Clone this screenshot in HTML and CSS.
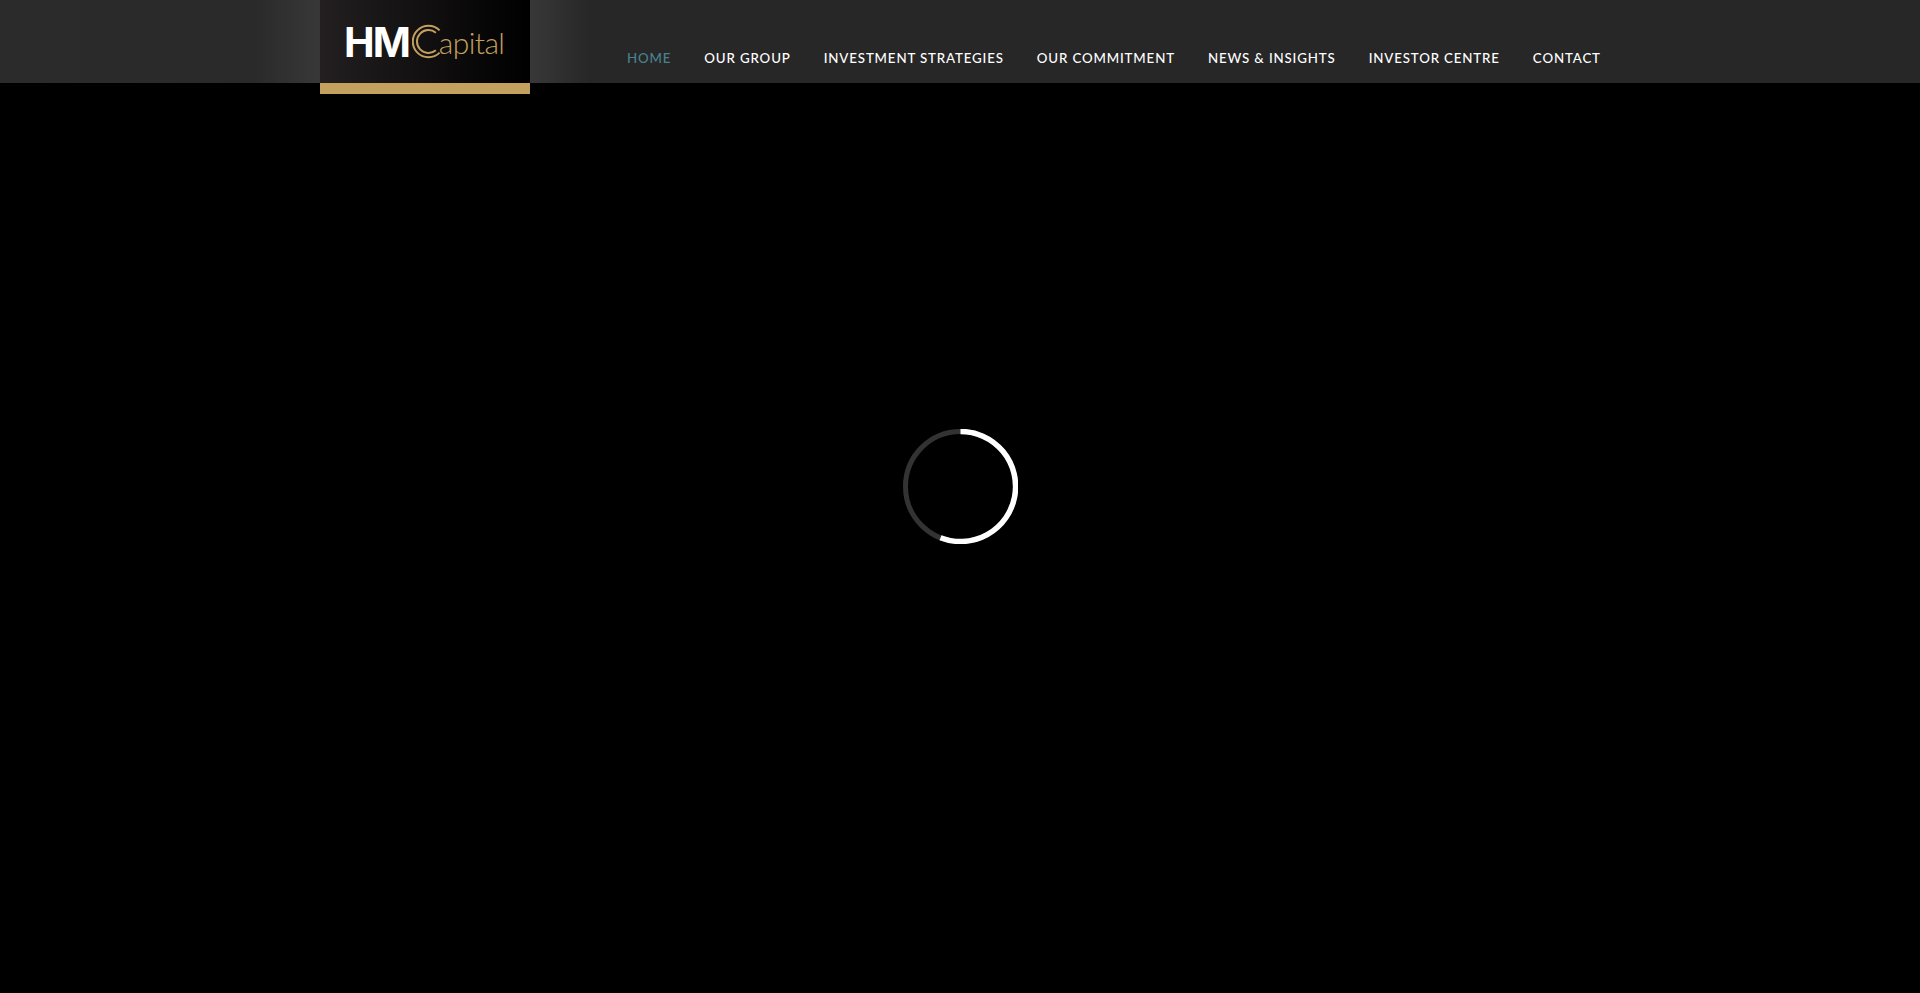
FILE: index.html
```html
<!DOCTYPE html>
<html lang="en">
<head>
  <meta charset="UTF-8" />
  <meta name="viewport" content="width=device-width, initial-scale=1.0"/>
  <title>HMCapital</title>
  <link rel="stylesheet" href="styles.css">
</head>

<body>
  <header class="site-header">
    <div class="header-inner">
      <a href="#" class="logo">
        <span class="logo-hm">HM</span>
        <svg class="logo-mark" viewBox="0 0 30 35" width="30" height="35" aria-hidden="true">
          <path d="M27.6 6.4 A15.7 15.7 0 1 0 27.6 28.6" />
          <path d="M23.9 8.7 A11.5 11.5 0 1 0 23.9 26.3" />
        </svg>
        <span class="logo-capital">apital</span>
      </a>
      <nav class="main-nav">
        <a href="#" class="active">Home</a>
        <a href="#">Our Group</a>
        <a href="#">Investment Strategies</a>
        <a href="#">Our Commitment</a>
        <a href="#">News &amp; Insights</a>
        <a href="#">Investor Centre</a>
        <a href="#">Contact</a>
      </nav>
    </div>
  </header>

  <main class="loader-wrap">
    <svg class="loader" viewBox="0 0 115 115" width="115" height="115" aria-hidden="true">
      <circle class="loader-track" cx="57.5" cy="57.5" r="55" />
      <path class="loader-arc" d="M57.5 2.5 A55 55 0 1 1 37.5 108.7" />
    </svg>
  </main>
</body>
</html>
```

FILE: styles.css
```css
html, body {
  height: 100%;
}

body {
  margin: 0;
  background: #000;
  font-family: "Lato", "Liberation Sans", sans-serif;
  display: flex;
  flex-direction: column;
  overflow: hidden;
}

.site-header {
  height: 83px;
  flex-shrink: 0;
  background: linear-gradient(to right,
    #2b2b2b 0, #2a2a2a 255px, #383838 320px,
    #383838 530px, #272727 590px, #272727 100%);
}

.header-inner {
  display: flex;
  height: 83px;
  margin-left: 320px;
}

.logo {
  width: 186px;
  height: 83px;
  padding-left: 24px;
  border-bottom: 11px solid #c4a05f;
  background: linear-gradient(to right, #231f20, #000);
  display: flex;
  align-items: center;
  text-decoration: none;
  color: #fff;
}

.logo-hm {
  font-family: "Inter", sans-serif;
  font-size: 41px;
  font-weight: 700;
  letter-spacing: -2px;
}

.logo-mark {
  margin-left: 3px;
  flex-shrink: 0;
}

.logo-mark path {
  fill: none;
  stroke: #c4a05f;
  stroke-width: 2;
}

.logo-capital {
  margin-left: -3px;
  color: #c4a05f;
  font-size: 30px;
  font-weight: 300;
  letter-spacing: -0.6px;
}

.main-nav {
  display: flex;
  align-items: flex-end;
  gap: 33px;
  margin-left: 97px;
  padding-bottom: 17px;
}

.main-nav a {
  color: #fff;
  text-decoration: none;
  text-transform: uppercase;
  font-size: 13.3px;
  font-weight: 500;
  letter-spacing: 0.85px;
}

.main-nav a.active {
  color: #4a8290;
}

.loader-wrap {
  flex: 1;
  display: flex;
  align-items: center;
  justify-content: center;
  padding-bottom: 103px;
}

.loader circle,
.loader path {
  fill: none;
  stroke-width: 5;
}

.loader-track {
  stroke: #333;
}

.loader .loader-arc {
  stroke: #fff;
  stroke-width: 5.5;
}
```
